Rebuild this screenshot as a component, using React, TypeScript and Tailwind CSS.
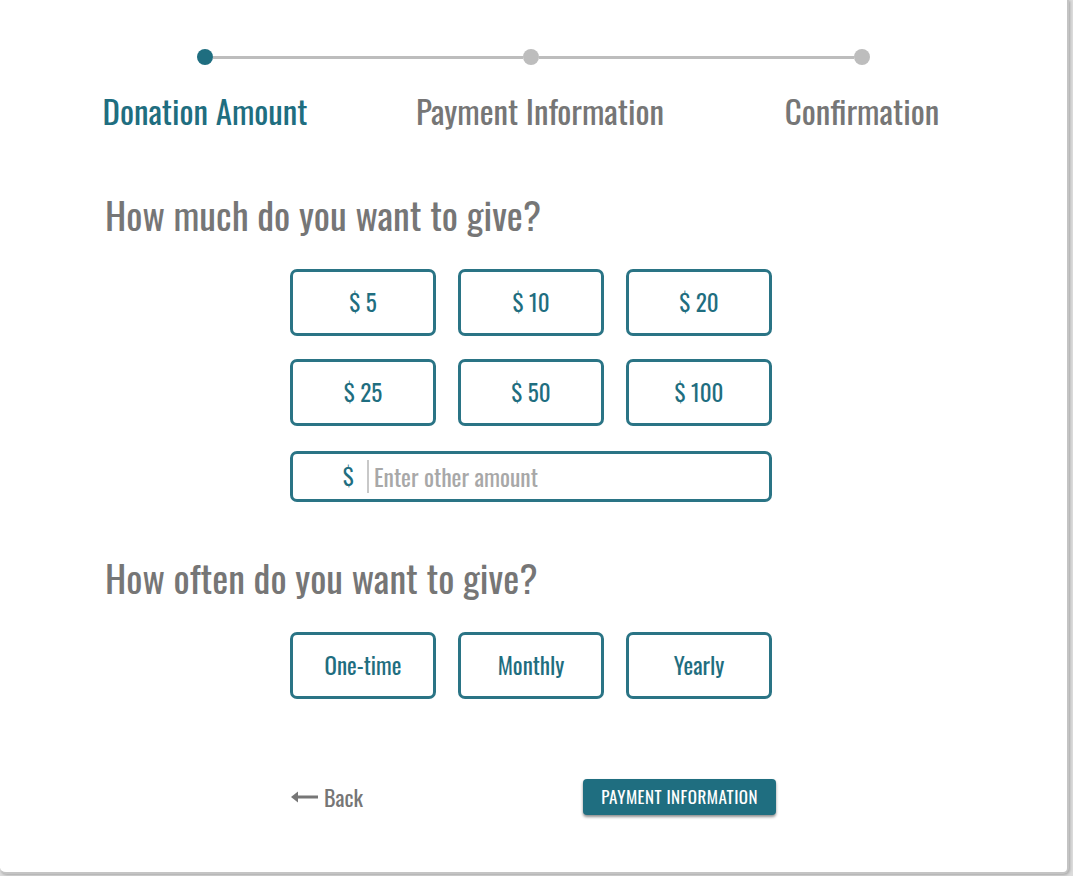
import React from "react";

const font = "font-['Oswald','Roboto_Condensed','Liberation_Sans_Narrow','DejaVu_Sans_Condensed','Arial_Narrow',sans-serif]";

const amounts = ["$ 5", "$ 10", "$ 20", "$ 25", "$ 50", "$ 100"];
const frequencies = ["One-time", "Monthly", "Yearly"];

function OptionButton({ label }: { label: string }) {
    return (
        <button className="h-[67px] rounded-[7px] border-[3px] border-[#2a7485] bg-white text-[23px] text-[#1f6e80] flex items-center justify-center">
            {label}
        </button>
    );
}

function App() {
    return (
        <div className={`w-[1073px] h-[876px] bg-[#dcdcdc] overflow-hidden ${font}`}>
            <div className="w-[1069px] h-[874px] bg-white rounded-b-[6px] border-r-2 border-b-2 border-[#c4c4c4] shadow-[1px_1px_3px_rgba(0,0,0,0.25)]">
                {/* stepper */}
                <div className="flex items-center pt-[49px] pl-[197px]">
                    <div className="w-4 h-4 rounded-full bg-[#1f6e80]" />
                    <div className="w-[310px] h-[3px] bg-[#bdbdbd]" />
                    <div className="w-4 h-4 rounded-full bg-[#bdbdbd]" />
                    <div className="w-[315px] h-[3px] bg-[#bdbdbd]" />
                    <div className="w-4 h-4 rounded-full bg-[#bdbdbd]" />
                </div>
                <div className="flex pl-[75px] mt-[26px] text-[33px] leading-[40px] text-[#767676] whitespace-nowrap">
                    <div className="w-[260px] text-center text-[#1f6e80]">Donation Amount</div>
                    <div className="w-[260px] ml-[75px] text-center">Payment Information</div>
                    <div className="w-[260px] ml-[62px] text-center">Confirmation</div>
                </div>

                <h2 className="ml-[105px] mt-[60px] text-[38px] leading-[46px] text-[#767676]">
                    How much do you want to give?
                </h2>

                <div className="ml-[290px] w-[482px] mt-[32px]">
                    <div className="grid grid-cols-3 gap-x-[22px] gap-y-[23px]">
                        {amounts.map((a) => (
                            <OptionButton key={a} label={a} />
                        ))}
                    </div>
                    <div className="mt-[25px] h-[51px] rounded-[7px] border-[3px] border-[#2a7485] flex items-center">
                        <span className="w-[74px] text-right pr-[13px] text-[23px] text-[#1f6e80]">$</span>
                        <div className="w-[2px] h-[33px] bg-[#c8c8c8]" />
                        <span className="ml-[5px] text-[23.5px] text-[#a8a8a8]">Enter other amount</span>
                    </div>
                </div>

                <h2 className="ml-[105px] mt-[52px] text-[38px] leading-[46px] text-[#767676]">
                    How often do you want to give?
                </h2>

                <div className="ml-[290px] w-[482px] mt-[32px] grid grid-cols-3 gap-x-[22px]">
                    {frequencies.map((f) => (
                        <OptionButton key={f} label={f} />
                    ))}
                </div>

                <div className="ml-[290px] w-[486px] mt-[80px] flex items-center justify-between">
                    <div className="flex items-center gap-[6px] text-[22px] text-[#767676]">
                        <svg width="28" height="12" viewBox="0 0 28 12">
                            <path d="M8 0.5 L1 6 L8 11.5 Z" fill="#767676" />
                            <rect x="5" y="4.5" width="23" height="3" fill="#767676" />
                        </svg>
                        <span>Back</span>
                    </div>
                    <button className="h-[36px] px-[18px] rounded-[4px] bg-[#1f6e80] text-white text-[17px] tracking-[0.5px] uppercase shadow-[0_2px_3px_rgba(0,0,0,0.45)]">
                        Payment Information
                    </button>
                </div>
            </div>
        </div>
    );
}

export default App;
